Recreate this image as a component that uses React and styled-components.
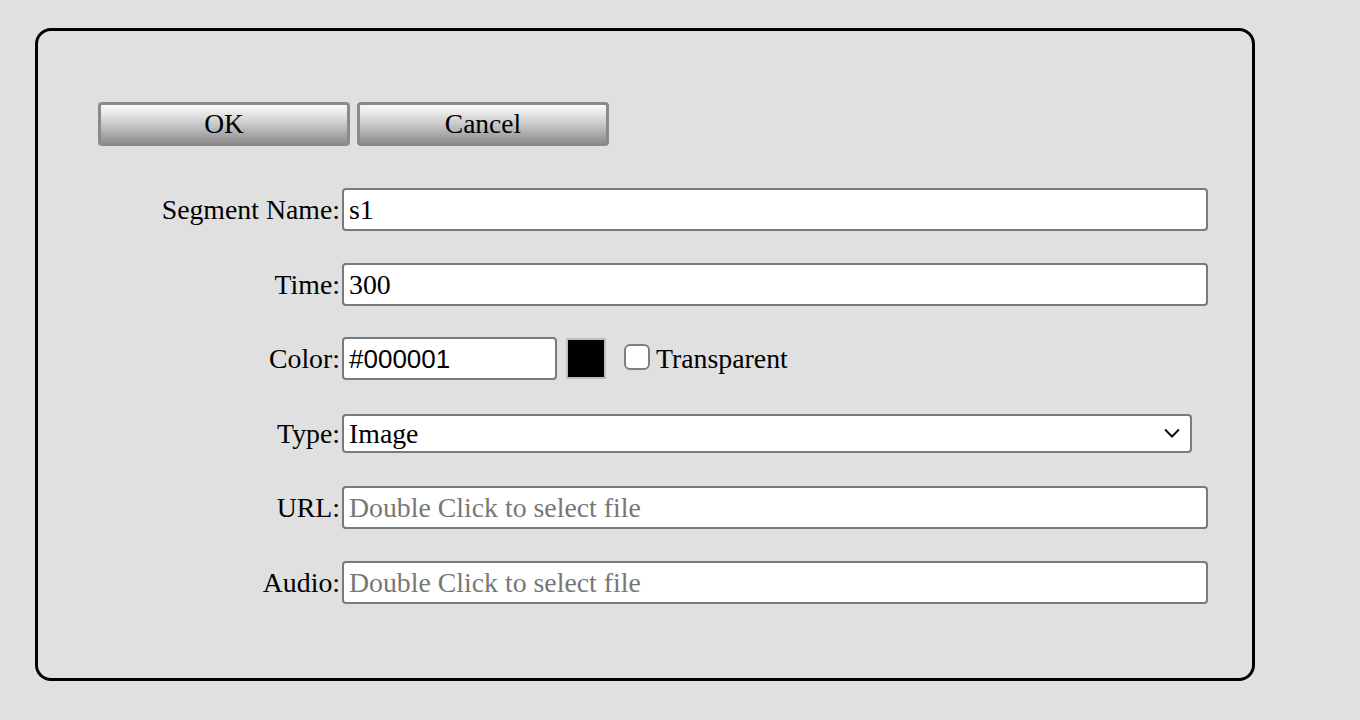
import styled, { createGlobalStyle } from "styled-components";

const Global = createGlobalStyle`
  html, body {
    margin: 0;
    background: #e0e0e0;
  }
  body {
    font-family: "Liberation Serif", "Times New Roman", serif;
    color: #000;
  }
`;

const Page = styled.div`
  padding: 28px 0 0 35px;
`;

const Panel = styled.div`
  width: 1154px;
  padding: 71px 0 74px 60px;
  border: 3px solid #000;
  border-radius: 16px;
`;

const ButtonRow = styled.div`
  display: flex;
  gap: 7px;
`;

const Button = styled.button`
  width: 252px;
  height: 44px;
  border: 3px solid #8a8a8a;
  border-radius: 4px;
  background: linear-gradient(#fafafa, #e4e4e4 25%, #b8b8b8 65%, #8e8e8e);
  font-family: "Liberation Serif", serif;
  font-size: 27.5px;
  color: #000;
  padding: 0;
`;

const Form = styled.div`
  margin-top: 42px;
  display: flex;
  flex-direction: column;
  gap: 31.6px;
`;

const Row = styled.div`
  display: flex;
  align-items: center;
  height: 43px;
`;

const Label = styled.label`
  width: 242px;
  margin-right: 2px;
  text-align: right;
  font-size: 27.8px;
  line-height: 1;
  padding-top: 1px;
  white-space: nowrap;
`;

const Field = styled.input`
  box-sizing: border-box;
  width: ${(p) => p.$width || 866}px;
  height: 43px;
  border: 2px solid #7a7a7a;
  border-radius: 4px;
  background: #fff;
  padding: 1px 6px 0 5px;
  font-family: ${(p) => (p.$sans ? '"Liberation Sans", Arial, sans-serif' : '"Liberation Serif", serif')};
  font-size: ${(p) => (p.$sans ? 26 : 27.8)}px;
  color: #000;
  outline: none;
  &::placeholder {
    color: #777;
  }
`;

const Swatch = styled.div`
  box-sizing: border-box;
  width: 40px;
  height: 41px;
  margin-left: 9px;
  border: 2px solid #bdbdbd;
  background: #000;
`;

const Check = styled.span`
  box-sizing: border-box;
  width: 26px;
  height: 26px;
  margin: 0 6px 0 18px;
  border: 2px solid #7f7f7f;
  border-radius: 6px;
  background: #fff;
  position: relative;
  top: -2px;
`;

const CheckText = styled.span`
  font-size: 27.8px;
`;

const SelectWrap = styled.div`
  position: relative;
  width: 850px;
  height: 39px;
`;

const Select = styled.select`
  appearance: none;
  box-sizing: border-box;
  width: 100%;
  height: 100%;
  border: 2px solid #7a7a7a;
  border-radius: 4px;
  background: #fff;
  padding: 0 6px 0 5px;
  font-family: "Liberation Serif", serif;
  font-size: 27.8px;
  color: #000;
  outline: none;
`;

const Chevron = styled.svg`
  position: absolute;
  right: 12px;
  top: 14px;
  pointer-events: none;
`;

export default function App() {
  return (
    <Page>
      <Global />
      <Panel>
        <ButtonRow>
          <Button>OK</Button>
          <Button>Cancel</Button>
        </ButtonRow>
        <Form>
          <Row>
            <Label>Segment Name:</Label>
            <Field defaultValue="s1" />
          </Row>
          <Row>
            <Label>Time:</Label>
            <Field defaultValue="300" />
          </Row>
          <Row>
            <Label>Color:</Label>
            <Field $width={215} $sans defaultValue="#000001" />
            <Swatch />
            <Check />
            <CheckText>Transparent</CheckText>
          </Row>
          <Row>
            <Label>Type:</Label>
            <SelectWrap>
              <Select defaultValue="Image">
                <option>Image</option>
              </Select>
              <Chevron width="16" height="10" viewBox="0 0 16 10">
                <path d="M1 1.5l7 7 7-7" fill="none" stroke="#111" strokeWidth="2" />
              </Chevron>
            </SelectWrap>
          </Row>
          <Row>
            <Label>URL:</Label>
            <Field placeholder="Double Click to select file" />
          </Row>
          <Row>
            <Label>Audio:</Label>
            <Field placeholder="Double Click to select file" />
          </Row>
        </Form>
      </Panel>
    </Page>
  );
}
